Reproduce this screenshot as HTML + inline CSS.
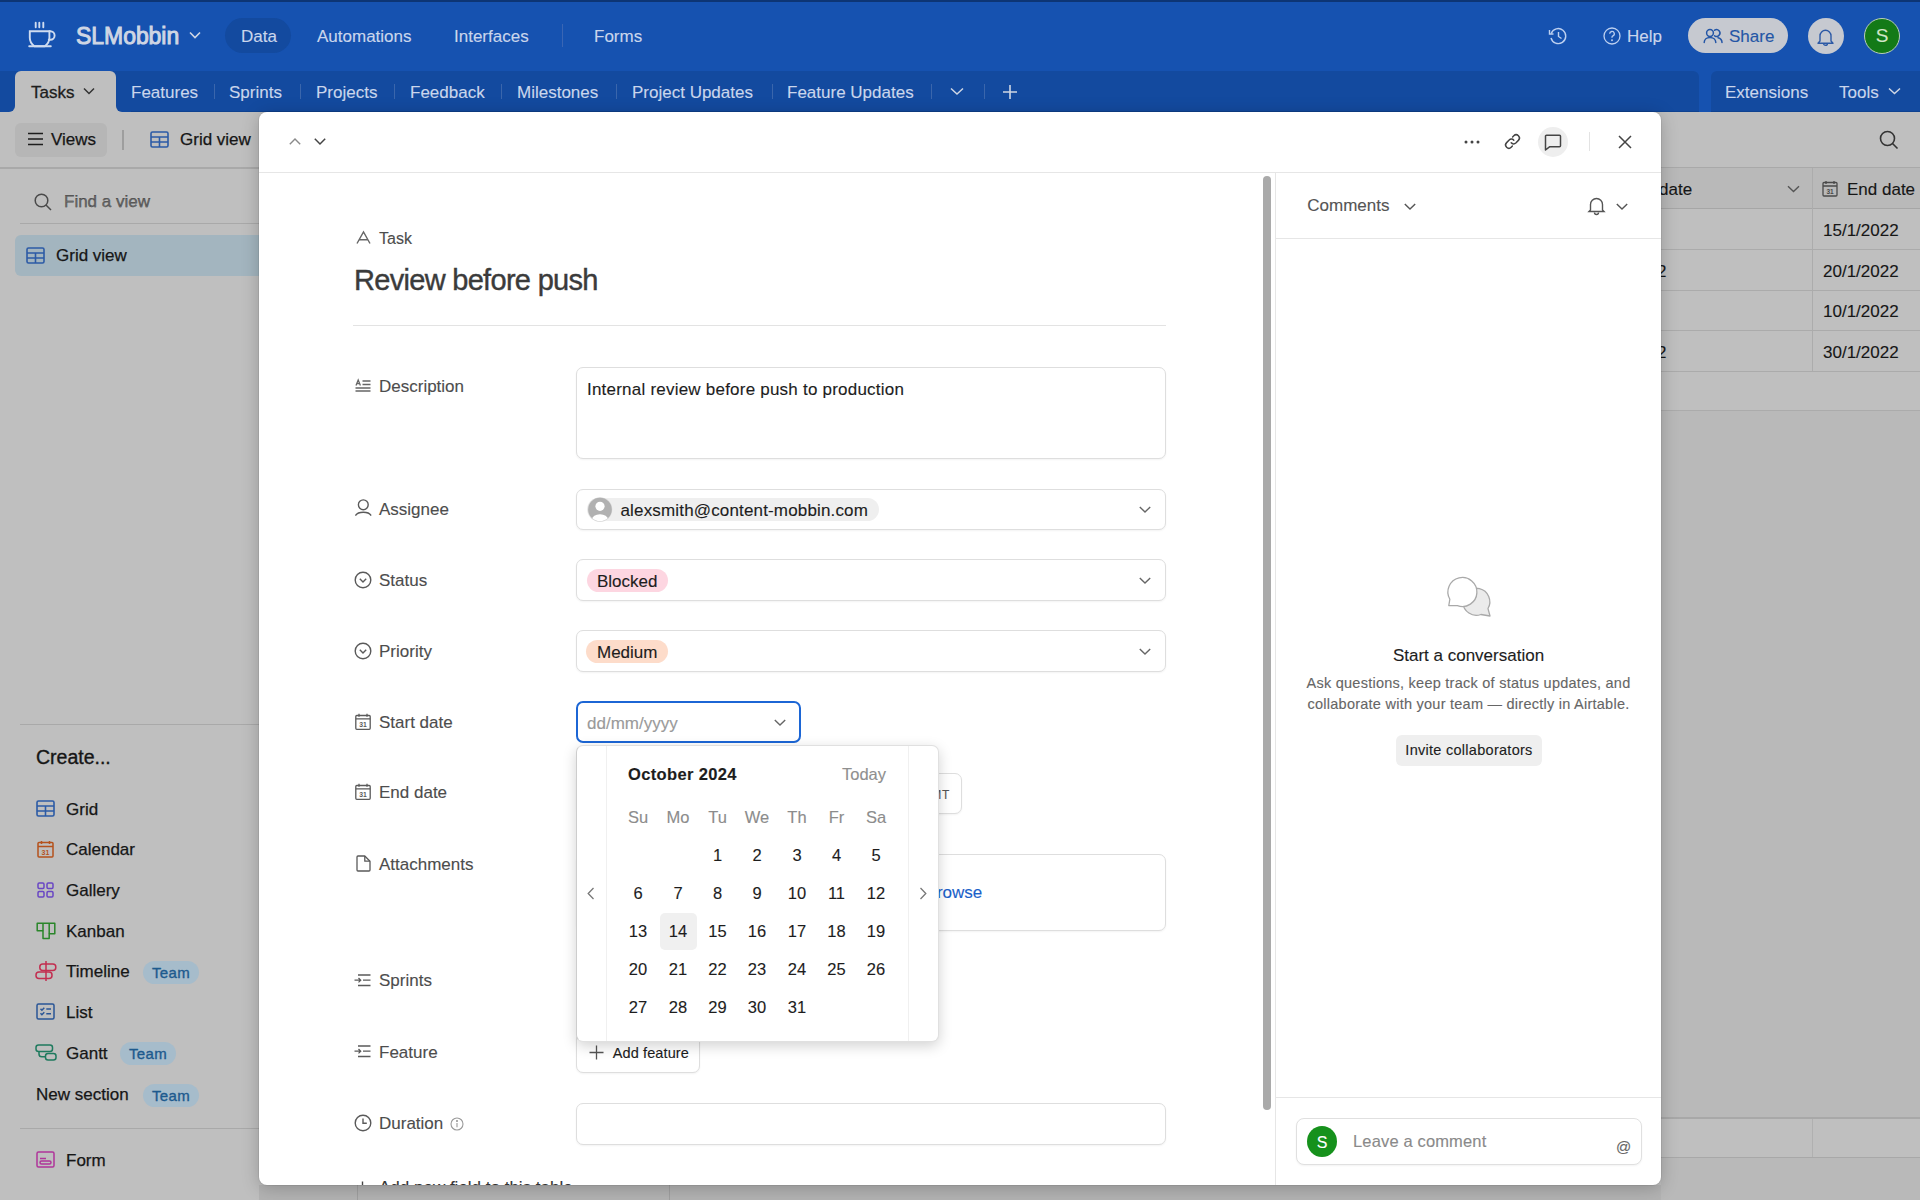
<!DOCTYPE html>
<html><head><meta charset="utf-8">
<style>
*{box-sizing:border-box;margin:0;padding:0}
html{background:#bfbfbf}
html,body{width:1920px;height:1200px;overflow:hidden;font-family:"Liberation Sans",sans-serif;color:#1d1d1d}
.a{position:absolute;white-space:nowrap;-webkit-text-stroke:0.12px currentColor}
svg{position:absolute;overflow:visible}
/* header */
#top{position:absolute;left:0;top:0;width:1920px;height:112px;background:#1652b0;border-top:2px solid #0d3574}
#tabs{position:absolute;left:0;top:71px;width:1699px;height:41px;background:#134a9f;border-radius:0 6px 0 0;border-bottom:1px solid #0f4290}
#tabs2{position:absolute;left:1711px;top:71px;width:209px;height:41px;background:#134a9f;border-radius:6px 0 0 0;border-bottom:1px solid #0f4290}
.nav{font-size:17px;color:#cad6ec;margin-top:0.5px}
.tab{font-size:17px;color:#cad6ec;top:83px}
.sep{position:absolute;width:1px;background:#3a66ac}
/* below */
#viewsbar{position:absolute;left:0;top:112px;width:1920px;height:57px;background:#bfbfbf;border-bottom:2px solid #a9a9a9}
#modal{position:absolute;left:259px;top:112px;width:1402px;height:1073px;background:#fff;border-radius:8px;box-shadow:0 0 0 1px rgba(0,0,0,.06),0 3px 18px rgba(0,0,0,.22);overflow:hidden}
.side{font-size:17px;color:#161616;-webkit-text-stroke:0.25px #161616}
.grid{font-size:17px;color:#161616}
.badge{width:56px;height:23px;border-radius:12px;background:#a6bccb;color:#1d5a8e;font-size:15px;text-align:center;line-height:24px;-webkit-text-stroke:0.35px #1d5a8e;letter-spacing:0.3px}
.lbl{font-size:17px;color:#4d4d4d}
.box{position:absolute;border:1px solid #e1e1e1;border-radius:6px;background:#fff;box-shadow:0 1px 2px rgba(0,0,0,.06)}
</style></head>
<body>

<div id="top"></div>
<svg style="left:28px;top:21px" width="28" height="28" viewBox="0 0 28 28" fill="none" stroke="#cfdcf0" stroke-width="1.9" stroke-linecap="round">
<path d="M7.7 1.8v4.4M11.3 1.8v4.4M15.3 1.8v4.4"/>
<path d="M1.8 10.3h19.6v6.5c0 3.8-2 6.6-4.6 8.4H6.4c-2.6-1.8-4.6-4.6-4.6-8.4z"/>
<path d="M21.4 10.3h1a4.2 4.2 0 0 1 0 8.4h-1.6"/>
<path d="M1.2 25.3h21.6"/>
</svg>
<div class="a" style="left:76px;top:22.5px;font-size:23px;color:#cfd6e4;-webkit-text-stroke:0.95px #cfd6e4;letter-spacing:-0.05px">SLMobbin</div>
<svg style="left:189px;top:31px" width="12" height="8" viewBox="0 0 12 8" fill="none" stroke="#cfd6e4" stroke-width="1.6"><path d="M1 1.5l5 5 5-5"/></svg>
<div class="a" style="left:225px;top:18px;width:66px;height:35px;border-radius:18px;background:#134a9f"></div>
<div class="a nav" style="left:241px;top:26px">Data</div>
<div class="a nav" style="left:317px;top:26px">Automations</div>
<div class="a nav" style="left:454px;top:26px">Interfaces</div>
<div class="sep" style="left:562px;top:24px;height:23px;background:#3a66b4"></div>
<div class="a nav" style="left:594px;top:26px">Forms</div>
<svg style="left:1548px;top:27px" width="20" height="18" viewBox="0 0 20 18" fill="none" stroke="#bdd0f0" stroke-width="1.4"><path d="M3.2 6.5A7.5 7.5 0 1 1 3 11"/><path d="M1.5 3v4h4"/><path d="M10.5 5v4.5l3 2"/></svg>
<svg style="left:1602px;top:26px" width="20" height="20" viewBox="0 0 20 20" fill="none" stroke="#bdd0f0" stroke-width="1.3"><circle cx="10" cy="10" r="8"/><path d="M7.7 7.8a2.3 2.3 0 1 1 3.2 2.1c-.6.3-.9.7-.9 1.3v.5"/><circle cx="10" cy="14.3" r=".35" fill="#bdd0f0"/></svg>
<div class="a nav" style="left:1627px;top:26px">Help</div>
<div class="a" style="left:1688px;top:18px;width:100px;height:35px;border-radius:18px;background:#c6c9d0"></div>
<svg style="left:1703px;top:27px" width="20" height="18" viewBox="0 0 20 18" fill="none" stroke="#2456a6" stroke-width="1.5" stroke-linecap="round"><circle cx="7" cy="6" r="3.4"/><path d="M11.6 3.2A3.4 3.4 0 1 1 11.6 8.8"/><path d="M1.2 15.6c0-3.1 2.6-5.2 5.8-5.2s5.8 2.1 5.8 5.2"/><path d="M15 10.8c2.3.6 4 2.3 4 4.8"/></svg>
<div class="a nav" style="left:1729px;top:26px;color:#2456a6">Share</div>
<div class="a" style="left:1808px;top:18px;width:36px;height:36px;border-radius:50%;background:#c6c9d0"></div>
<svg style="left:1816px;top:27px" width="19" height="20" viewBox="0 0 19 20" fill="none" stroke="#2d5aa6" stroke-width="1.4" stroke-linejoin="round"><path d="M4 14V8.8a5.5 5.5 0 0 1 11 0V14l2 2.2H2z"/><path d="M7.6 16.4a1.9 1.9 0 0 0 3.8 0"/></svg>
<div class="a" style="left:1864px;top:18px;width:36px;height:36px;border-radius:50%;background:#137a17;border:1.5px solid #b9cdb9"></div>
<div class="a" style="left:1864px;top:25px;width:36px;text-align:center;font-size:19px;color:#d2e6c8">S</div>

<div id="tabs"></div>
<div id="tabs2"></div>
<div class="a" style="left:9px;top:105px;width:118px;height:7px;background:#bfbfbf"></div>
<div class="a" style="left:0px;top:95px;width:15px;height:17px;background:#134a9f;border-radius:0 0 6px 0"></div>
<div class="a" style="left:116px;top:95px;width:15px;height:17px;background:#134a9f;border-radius:0 0 0 6px"></div>
<div class="a" style="left:15px;top:71px;width:101px;height:42px;background:#bfbfbf;border-radius:6px 6px 0 0"></div>
<div class="a tab" style="left:31px;color:#1d1d1d;-webkit-text-stroke:0.3px #1d1d1d">Tasks</div>
<svg style="left:83px;top:87px" width="12" height="8" viewBox="0 0 12 8" fill="none" stroke="#333" stroke-width="1.5"><path d="M1 1.5l5 5 5-5"/></svg>
<div class="a tab" style="left:131px">Features</div>
<div class="sep" style="left:214px;top:84px;height:15px"></div>
<div class="a tab" style="left:229px">Sprints</div>
<div class="sep" style="left:300px;top:84px;height:15px"></div>
<div class="a tab" style="left:316px">Projects</div>
<div class="sep" style="left:394px;top:84px;height:15px"></div>
<div class="a tab" style="left:410px">Feedback</div>
<div class="sep" style="left:501px;top:84px;height:15px"></div>
<div class="a tab" style="left:517px">Milestones</div>
<div class="sep" style="left:616px;top:84px;height:15px"></div>
<div class="a tab" style="left:632px">Project Updates</div>
<div class="sep" style="left:772px;top:84px;height:15px"></div>
<div class="a tab" style="left:787px">Feature Updates</div>
<div class="sep" style="left:931px;top:84px;height:15px"></div>
<svg style="left:950px;top:87px" width="14" height="8" viewBox="0 0 14 8" fill="none" stroke="#cfd6e4" stroke-width="1.5"><path d="M1 1.5l6 5.5 6-5.5"/></svg>
<div class="sep" style="left:984px;top:84px;height:15px"></div>
<svg style="left:1002px;top:84px" width="16" height="16" viewBox="0 0 16 16" fill="none" stroke="#cfd6e4" stroke-width="1.6"><path d="M8 1v14M1 8h14"/></svg>
<div class="a tab" style="left:1725px">Extensions</div>
<div class="a tab" style="left:1839px">Tools</div>
<svg style="left:1888px;top:87px" width="13" height="8" viewBox="0 0 13 8" fill="none" stroke="#cfd6e4" stroke-width="1.5"><path d="M1 1.5l5.5 5 5.5-5"/></svg>

<div id="viewsbar"></div>
<div class="a" style="left:15px;top:123px;width:92px;height:34px;border-radius:6px;background:#b6b6b6"></div>
<svg style="left:27px;top:131px" width="18" height="16" viewBox="0 0 18 16" fill="none" stroke="#1d1d1d" stroke-width="1.6"><path d="M1 2.5h15M1 8h15M1 13.5h15"/></svg>
<div class="a side" style="left:51px;top:130px">Views</div>
<div class="a" style="left:122px;top:130px;width:2px;height:20px;background:#9e9e9e"></div>
<svg style="left:150px;top:131px" width="19" height="17" viewBox="0 0 19 17" fill="none" stroke="#2c5ba6" stroke-width="1.6"><rect x="1" y="1" width="17" height="15" rx="1.5"/><path d="M1 6h17M1 11h17M9.5 6v10"/></svg>
<div class="a side" style="left:180px;top:130px">Grid view</div>
<svg style="left:1879px;top:130px" width="20" height="20" viewBox="0 0 20 20" fill="none" stroke="#333" stroke-width="1.6"><circle cx="8.5" cy="8.5" r="7"/><path d="M13.5 13.5l5 5"/></svg>

<!-- sidebar -->
<svg style="left:34px;top:193px" width="18" height="18" viewBox="0 0 18 18" fill="none" stroke="#4a4a4a" stroke-width="1.5"><circle cx="7.5" cy="7.5" r="6.3"/><path d="M12 12l5 5"/></svg>
<div class="a side" style="left:64px;top:192px;color:#6c6c6c">Find a view</div>
<div class="a" style="left:20px;top:223px;width:240px;height:1px;background:#a9a9a9"></div>
<div class="a" style="left:15px;top:235px;width:250px;height:41px;border-radius:6px;background:#a3b5bf"></div>
<svg style="left:26px;top:247px" width="19" height="17" viewBox="0 0 19 17" fill="none" stroke="#2c5ba6" stroke-width="1.6"><rect x="1" y="1" width="17" height="15" rx="1.5"/><path d="M1 6h17M1 11h17M9.5 6v10"/></svg>
<div class="a side" style="left:56px;top:246px">Grid view</div>
<div class="a" style="left:20px;top:724px;width:240px;height:1px;background:#a9a9a9"></div>
<div class="a" style="left:36px;top:746px;font-size:19.5px;color:#161616;-webkit-text-stroke:0.35px #161616">Create...</div>
<svg style="left:36px;top:800px" width="19" height="17" viewBox="0 0 19 17" fill="none" stroke="#2c5ba6" stroke-width="1.6"><rect x="1" y="1" width="17" height="15" rx="1.5"/><path d="M1 6h17M1 11h17M9.5 6v10"/></svg>
<div class="a side" style="left:66px;top:800px">Grid</div>
<svg style="left:37px;top:840px" width="17" height="18" viewBox="0 0 17 18" fill="none" stroke="#b5521c" stroke-width="1.5"><rect x="1" y="2.5" width="15" height="14.5" rx="1"/><path d="M1 6.5h15M4.5 1v3M12.5 1v3"/><text x="8.5" y="14.6" font-size="7" font-family="Liberation Sans" font-weight="bold" text-anchor="middle" fill="#b5521c" stroke="none">31</text></svg>
<div class="a side" style="left:66px;top:840px">Calendar</div>
<svg style="left:37px;top:882px" width="17" height="16" viewBox="0 0 17 16" fill="none" stroke="#6a47c4" stroke-width="1.5"><rect x="1" y="1" width="6" height="5.5" rx="1.2"/><rect x="10" y="1" width="6" height="5.5" rx="1.2"/><rect x="1" y="9.5" width="6" height="5.5" rx="1.2"/><rect x="10" y="9.5" width="6" height="5.5" rx="1.2"/></svg>
<div class="a side" style="left:66px;top:881px">Gallery</div>
<svg style="left:36px;top:922px" width="20" height="18" viewBox="0 0 20 18" fill="none" stroke="#2a862a" stroke-width="1.5" stroke-linejoin="round"><path d="M1.2 1.2h17.6v10.6h-5.6v4.8H7V8.8H1.2z"/><path d="M7 1.2v7.6M13.2 1.2v10.6"/></svg>
<div class="a side" style="left:66px;top:922px">Kanban</div>
<svg style="left:35px;top:960px" width="22" height="22" viewBox="0 0 22 22" fill="none" stroke="#c22e50" stroke-width="1.5"><path d="M11 1v20"/><rect x="4.8" y="4" width="16" height="6.5" rx="3"/><rect x="1" y="12" width="16" height="6.5" rx="3"/></svg>
<div class="a side" style="left:66px;top:962px">Timeline</div>
<div class="a badge" style="left:143px;top:961px">Team</div>
<svg style="left:36px;top:1003px" width="19" height="17" viewBox="0 0 19 17" fill="none" stroke="#2a5596" stroke-width="1.5"><rect x="1" y="1" width="17" height="15" rx="1.5"/><path d="M4.5 5.8l1.4 1.4 2.4-2.4M4.5 10.3l1.4 1.4 2.4-2.4M10.3 6h4.7M10.3 10.8h4.7"/></svg>
<div class="a side" style="left:66px;top:1003px">List</div>
<svg style="left:35px;top:1044px" width="22" height="18" viewBox="0 0 22 18" fill="none" stroke="#1f7a5e" stroke-width="1.5"><rect x="1" y="1" width="16.5" height="6.5" rx="2.5"/><rect x="10.5" y="9.5" width="10.5" height="6.5" rx="2.5"/><path d="M4 7.5v2.5a2.8 2.8 0 0 0 2.8 2.8h3.7"/></svg>
<div class="a side" style="left:66px;top:1044px">Gantt</div>
<div class="a badge" style="left:120px;top:1042px">Team</div>
<div class="a side" style="left:36px;top:1085px">New section</div>
<div class="a badge" style="left:143px;top:1084px">Team</div>
<div class="a" style="left:20px;top:1128px;width:240px;height:1px;background:#a9a9a9"></div>
<svg style="left:36px;top:1151px" width="19" height="17" viewBox="0 0 19 17" fill="none" stroke="#b0359a" stroke-width="1.5"><rect x="1" y="1" width="17" height="15" rx="1.5"/><path d="M4 7.5h6"/><rect x="4" y="10" width="11" height="3" rx="1.5"/></svg>
<div class="a side" style="left:66px;top:1151px">Form</div>

<!-- grid right -->
<div class="a" style="left:1661px;top:168px;width:259px;height:41px;background:#b9b9b9;border-bottom:1px solid #a6a6a6"></div>
<div class="a grid" style="left:1659px;top:179.5px">date</div>
<svg style="left:1787px;top:185px" width="13" height="8" viewBox="0 0 13 8" fill="none" stroke="#555" stroke-width="1.4"><path d="M1 1.2l5.5 5.3 5.5-5.3"/></svg>
<div class="a" style="left:1812px;top:168px;width:1px;height:204px;background:#acacac"></div>
<svg style="left:1822px;top:180px" width="16" height="17" viewBox="0 0 16 17" fill="none" stroke="#4a4a4a" stroke-width="1.3"><rect x="1" y="2.5" width="14" height="13.5" rx="1"/><path d="M1 6h14M4 1v3M12 1v3"/><text x="8" y="14" font-size="6.5" font-family="Liberation Sans" font-weight="bold" text-anchor="middle" fill="#4a4a4a" stroke="none">31</text></svg>
<div class="a grid" style="left:1847px;top:179.5px">End date</div>
<div class="a" style="left:1661px;top:249px;width:259px;height:1px;background:#ababab"></div>
<div class="a" style="left:1661px;top:290px;width:259px;height:1px;background:#ababab"></div>
<div class="a" style="left:1661px;top:330px;width:259px;height:1px;background:#ababab"></div>
<div class="a" style="left:1661px;top:371px;width:259px;height:1px;background:#ababab"></div>
<div class="a" style="left:1661px;top:209px;width:259px;height:202px;background:#bfbfbf;z-index:-1"></div>
<div class="a" style="left:1661px;top:410px;width:259px;height:1px;background:#ababab"></div>
<div class="a" style="left:1661px;top:411px;width:259px;height:789px;background:#b9b9b9;z-index:-1"></div>
<div class="a grid" style="left:1823px;top:220.5px">15/1/2022</div>
<div class="a grid" style="left:1657px;top:261.5px">2</div>
<div class="a grid" style="left:1823px;top:261.5px">20/1/2022</div>
<div class="a grid" style="left:1823px;top:301.5px">10/1/2022</div>
<div class="a grid" style="left:1657px;top:342.5px">2</div>
<div class="a grid" style="left:1823px;top:342.5px">30/1/2022</div>
<div class="a" style="left:1661px;top:1117px;width:259px;height:41px;background:#bfbfbf;border-top:2px solid #a8a8a8;border-bottom:1px solid #a8a8a8"></div>
<div class="a" style="left:1812px;top:1119px;width:1px;height:38px;background:#b0b0b0"></div>
<div class="a" style="left:259px;top:1185px;width:1402px;height:15px;background:#b3b3b3"></div>
<div class="a" style="left:357px;top:1185px;width:1px;height:15px;background:#a0a0a0"></div>
<div class="a" style="left:669px;top:1185px;width:1px;height:15px;background:#a0a0a0"></div>

<div id="modal"><div style="position:absolute;left:-259px;top:-112px;width:1920px;height:1200px">
<div class="a" style="left:259px;top:172px;width:1402px;height:1px;background:#e6e6e6"></div>
<svg style="left:289px;top:138px" width="12" height="7" viewBox="0 0 12 7" fill="none" stroke="#8a8a8a" stroke-width="1.4"><path d="M0.8 6.2L6 1l5.2 5.2"/></svg>
<svg style="left:314px;top:138px" width="12" height="7" viewBox="0 0 12 7" fill="none" stroke="#444" stroke-width="1.5"><path d="M0.8 0.8L6 6l5.2-5.2"/></svg>
<svg style="left:1464px;top:140px" width="16" height="4" viewBox="0 0 16 4"><circle cx="2" cy="2" r="1.5" fill="#444"/><circle cx="8" cy="2" r="1.5" fill="#444"/><circle cx="14" cy="2" r="1.5" fill="#444"/></svg>
<svg style="left:1504px;top:133px" width="17" height="17" viewBox="0 0 17 17" fill="none" stroke="#444" stroke-width="1.5" stroke-linecap="round"><path d="M7.2 9.8a3.2 3.2 0 0 0 4.6.2l2.6-2.6a3.2 3.2 0 0 0-4.6-4.6L8.6 4"/><path d="M9.8 7.2a3.2 3.2 0 0 0-4.6-.2L2.6 9.6a3.2 3.2 0 0 0 4.6 4.6L8.4 13"/></svg>
<div class="a" style="left:1538px;top:127px;width:30px;height:30px;border-radius:50%;background:#eeeeee"></div>
<svg style="left:1544px;top:134px" width="18" height="17" viewBox="0 0 18 17" fill="none" stroke="#444" stroke-width="1.5" stroke-linejoin="round"><path d="M1.5 2.2a1 1 0 0 1 1-1h13a1 1 0 0 1 1 1v9.6a1 1 0 0 1-1 1H5.5L1.5 16z"/></svg>
<div class="a" style="left:1589px;top:132px;width:1px;height:19px;background:#e3e3e3"></div>
<svg style="left:1618px;top:135px" width="14" height="14" viewBox="0 0 14 14" fill="none" stroke="#444" stroke-width="1.5"><path d="M1 1l12 12M13 1L1 13"/></svg>
<div class="a" style="left:1263px;top:176px;width:8px;height:934px;border-radius:4px;background:#aaaaaa"></div>
<div class="a" style="left:1275px;top:172px;width:1px;height:1013px;background:#e6e6e6"></div>
<svg style="left:356px;top:231px" width="15" height="13" viewBox="0 0 15 13" fill="none" stroke="#666" stroke-width="1.4"><path d="M1 12.5L7.5 1l6.5 11.5M3.2 8.8h8.6"/></svg>
<div class="a" style="left:379px;top:230.12px;font-size:16px;color:#4d4d4d;">Task</div>
<div class="a" style="left:354px;top:264.06px;font-size:29px;color:#3b3b3b;letter-spacing:-0.7px;-webkit-text-stroke:0.4px #3b3b3b;">Review before push</div>
<div class="a" style="left:353px;top:325px;width:813px;height:1px;background:#e3e3e3"></div>
<svg style="left:355px;top:379px" width="16" height="13" viewBox="0 0 16 13" fill="none" stroke="#666" stroke-width="1.3"><path d="M1 6.5L3.2 1l2.2 5.5M1.8 4.6h2.8M7.5 2h8M7.5 5.5h8M0.5 9h15M0.5 12h15"/></svg>
<div class="a" style="left:379px;top:376.92px;font-size:17px;color:#4d4d4d;">Description</div>
<div class="a" style="left:576px;top:367px;width:590px;height:92px;border:1px solid #dedede;border-radius:7px;background:#fff;box-shadow:0 1px 2px rgba(0,0,0,.05);"></div>
<div class="a" style="left:587px;top:380.22px;font-size:17px;color:#1d1d1d;letter-spacing:0.22px;">Internal review before push to production</div>
<svg style="left:355px;top:499px" width="17" height="17" viewBox="0 0 17 17" fill="none" stroke="#5a5a5a" stroke-width="1.4" stroke-linecap="round"><circle cx="8.3" cy="5.8" r="4.9"/><path d="M0.8 16.2C3 12.2 13.6 12.2 15.8 16.2"/></svg>
<div class="a" style="left:379px;top:499.62px;font-size:17px;color:#4d4d4d;">Assignee</div>
<div class="a" style="left:576px;top:489px;width:590px;height:41px;border:1px solid #dedede;border-radius:7px;background:#fff;box-shadow:0 1px 2px rgba(0,0,0,.05);"></div>
<div class="a" style="left:587px;top:498px;width:292px;height:23px;border-radius:12px;background:#efefef"></div>
<svg style="left:587px;top:497px" width="26" height="25" viewBox="0 0 26 25"><defs><clipPath id="av"><circle cx="13" cy="12.5" r="11.8"/></clipPath></defs><circle cx="13" cy="12.5" r="12.3" fill="#dcdcdc"/><circle cx="13" cy="12.5" r="11.8" fill="#b1b1b1"/><g clip-path="url(#av)" fill="#fff"><circle cx="13" cy="9.3" r="4.6"/><ellipse cx="13" cy="22.5" rx="8" ry="5.2"/></g></svg>
<div class="a" style="left:620.5px;top:500.62px;font-size:17px;color:#1d1d1d;letter-spacing:0.16px;">alexsmith@content-mobbin.com</div>
<svg style="left:1139px;top:506px" width="12" height="7.2" viewBox="0 0 12 7" fill="none" stroke="#666" stroke-width="1.40"><path d="M0.8 0.8L6 6l5.2-5.2"/></svg>
<svg style="left:354px;top:571px" width="18" height="18" viewBox="0 0 18 18" fill="none" stroke="#5a5a5a" stroke-width="1.4"><circle cx="9" cy="9" r="7.8"/><path d="M5.8 7.8L9 11l3.2-3.2"/></svg>
<div class="a" style="left:379px;top:570.62px;font-size:17px;color:#4d4d4d;">Status</div>
<div class="a" style="left:576px;top:559px;width:590px;height:42px;border:1px solid #dedede;border-radius:7px;background:#fff;box-shadow:0 1px 2px rgba(0,0,0,.05);"></div>
<div class="a" style="left:587px;top:569px;width:81px;height:23px;border-radius:12px;background:#fdd6e1"></div>
<div class="a" style="left:597px;top:571.62px;font-size:17px;color:#1d1d1d;">Blocked</div>
<svg style="left:1139px;top:577px" width="12" height="7.2" viewBox="0 0 12 7" fill="none" stroke="#666" stroke-width="1.40"><path d="M0.8 0.8L6 6l5.2-5.2"/></svg>
<svg style="left:354px;top:642px" width="18" height="18" viewBox="0 0 18 18" fill="none" stroke="#5a5a5a" stroke-width="1.4"><circle cx="9" cy="9" r="7.8"/><path d="M5.8 7.8L9 11l3.2-3.2"/></svg>
<div class="a" style="left:379px;top:641.62px;font-size:17px;color:#4d4d4d;">Priority</div>
<div class="a" style="left:576px;top:630px;width:590px;height:42px;border:1px solid #dedede;border-radius:7px;background:#fff;box-shadow:0 1px 2px rgba(0,0,0,.05);"></div>
<div class="a" style="left:586px;top:640px;width:82px;height:23px;border-radius:12px;background:#fddcca"></div>
<div class="a" style="left:597px;top:642.62px;font-size:17px;color:#1d1d1d;">Medium</div>
<svg style="left:1139px;top:648px" width="12" height="7.2" viewBox="0 0 12 7" fill="none" stroke="#666" stroke-width="1.40"><path d="M0.8 0.8L6 6l5.2-5.2"/></svg>
<svg style="left:355px;top:713px" width="16" height="17" viewBox="0 0 16 17" fill="none" stroke="#5a5a5a" stroke-width="1.3"><rect x="0.8" y="2.5" width="14.4" height="13.8" rx="1"/><path d="M0.8 5.8h14.4M4 0.8v3M12 0.8v3"/><text x="8" y="14.2" font-size="6.8" font-family="Liberation Sans" font-weight="bold" text-anchor="middle" fill="#5a5a5a" stroke="none">31</text></svg>
<div class="a" style="left:379px;top:712.62px;font-size:17px;color:#4d4d4d;">Start date</div>
<div class="a" style="left:576px;top:701px;width:225px;height:42px;border:2px solid #1c66d5;border-radius:7px;background:#fff"></div>
<div class="a" style="left:587px;top:713.62px;font-size:17px;color:#9a9a9a;">dd/mm/yyyy</div>
<svg style="left:774px;top:719px" width="12" height="7.2" viewBox="0 0 12 7" fill="none" stroke="#666" stroke-width="1.40"><path d="M0.8 0.8L6 6l5.2-5.2"/></svg>
<svg style="left:355px;top:783px" width="16" height="17" viewBox="0 0 16 17" fill="none" stroke="#5a5a5a" stroke-width="1.3"><rect x="0.8" y="2.5" width="14.4" height="13.8" rx="1"/><path d="M0.8 5.8h14.4M4 0.8v3M12 0.8v3"/><text x="8" y="14.2" font-size="6.8" font-family="Liberation Sans" font-weight="bold" text-anchor="middle" fill="#5a5a5a" stroke="none">31</text></svg>
<div class="a" style="left:379px;top:783.32px;font-size:17px;color:#4d4d4d;">End date</div>
<div class="a" style="left:576px;top:773px;width:386px;height:41px;border:1px solid #dedede;border-radius:7px;background:#fff;box-shadow:0 1px 2px rgba(0,0,0,.05);"></div>
<div class="a" style="left:921px;top:788.14px;font-size:12px;color:#555;letter-spacing:0.8px;">GMT</div>
<svg style="left:356px;top:855px" width="15" height="17" viewBox="0 0 15 17" fill="none" stroke="#5a5a5a" stroke-width="1.3" stroke-linejoin="round"><path d="M1 2a1 1 0 0 1 1-1h6.8L14 6.2V15a1 1 0 0 1-1 1H2a1 1 0 0 1-1-1z"/><path d="M8.8 1v5.2H14"/></svg>
<div class="a" style="left:379px;top:854.62px;font-size:17px;color:#4d4d4d;">Attachments</div>
<div class="a" style="left:576px;top:854px;width:590px;height:77px;border:1px solid #dedede;border-radius:7px;background:#fff;box-shadow:0 1px 2px rgba(0,0,0,.05);"></div>
<div class="a" style="left:927.5px;top:882.62px;font-size:17px;color:#1b61c9;">browse</div>
<svg style="left:354px;top:974px" width="17" height="13" viewBox="0 0 17 13" fill="none" stroke="#5a5a5a" stroke-width="1.3"><path d="M4 1h12.5M0.5 6.2h6M4.5 4l2.2 2.2L4.5 8.4M9 6.2h7.5M4 11.5h12.5"/></svg>
<div class="a" style="left:379px;top:970.62px;font-size:17px;color:#4d4d4d;">Sprints</div>
<div class="a" style="left:576px;top:961px;width:124px;height:41px;border:1px solid #dedede;border-radius:7px;background:#fff"></div>
<svg style="left:354px;top:1045px" width="17" height="13" viewBox="0 0 17 13" fill="none" stroke="#5a5a5a" stroke-width="1.3"><path d="M4 1h12.5M0.5 6.2h6M4.5 4l2.2 2.2L4.5 8.4M9 6.2h7.5M4 11.5h12.5"/></svg>
<div class="a" style="left:379px;top:1042.62px;font-size:17px;color:#4d4d4d;">Feature</div>
<div class="a" style="left:576px;top:1032px;width:124px;height:41px;border:1px solid #dedede;border-radius:7px;background:#fff;box-shadow:0 1px 2px rgba(0,0,0,.05)"></div>
<svg style="left:589px;top:1045px" width="15" height="15" viewBox="0 0 15 15" fill="none" stroke="#555" stroke-width="1.3"><path d="M7.5 0.5v14M0.5 7.5h14"/></svg>
<div class="a" style="left:612.7px;top:1044.88px;font-size:14.5px;color:#1d1d1d;letter-spacing:0.12px;">Add feature</div>
<svg style="left:354px;top:1114px" width="18" height="18" viewBox="0 0 18 18" fill="none" stroke="#5a5a5a" stroke-width="1.4"><circle cx="9" cy="9" r="7.8"/><path d="M9 4.5V9.3h3.8"/></svg>
<div class="a" style="left:379px;top:1113.62px;font-size:17px;color:#4d4d4d;">Duration</div>
<svg style="left:450px;top:1117px" width="14" height="14" viewBox="0 0 14 14" fill="none" stroke="#9a9a9a" stroke-width="1.1"><circle cx="7" cy="7" r="6"/><path d="M7 6v4.2"/><circle cx="7" cy="4" r=".5" fill="#9a9a9a"/></svg>
<div class="a" style="left:576px;top:1103px;width:590px;height:42px;border:1px solid #dedede;border-radius:7px;background:#fff;box-shadow:0 1px 2px rgba(0,0,0,.05);"></div>
<svg style="left:355px;top:1181px" width="15" height="15" viewBox="0 0 15 15" fill="none" stroke="#444" stroke-width="1.4"><path d="M7.5 0.5v14M0.5 7.5h14"/></svg>
<div class="a" style="left:379px;top:1177.62px;font-size:17px;color:#333;">Add new field to this table</div>
<div class="a" style="left:576px;top:745px;width:363px;height:297px;border:1px solid #e0e0e0;border-left-color:#cdcdcd;border-radius:7px;background:#fff;box-shadow:0 4px 14px rgba(0,0,0,.18)"></div>
<div class="a" style="left:606px;top:746px;width:1px;height:295px;background:#f0f0f0"></div>
<div class="a" style="left:908px;top:746px;width:1px;height:295px;background:#f0f0f0"></div>
<div class="a" style="left:628px;top:764.77px;font-size:16.5px;color:#1d1d1d;font-weight:bold;letter-spacing:0.35px;">October 2024</div>
<div class="a" style="left:842px;top:765.07px;font-size:16.5px;color:#8f8f8f;">Today</div>
<div class="a" style="left:618px;width:40px;text-align:center;top:808.17px;font-size:16.5px;color:#8c8c8c">Su</div>
<div class="a" style="left:658px;width:40px;text-align:center;top:808.17px;font-size:16.5px;color:#8c8c8c">Mo</div>
<div class="a" style="left:697.5px;width:40px;text-align:center;top:808.17px;font-size:16.5px;color:#8c8c8c">Tu</div>
<div class="a" style="left:737px;width:40px;text-align:center;top:808.17px;font-size:16.5px;color:#8c8c8c">We</div>
<div class="a" style="left:777px;width:40px;text-align:center;top:808.17px;font-size:16.5px;color:#8c8c8c">Th</div>
<div class="a" style="left:816.5px;width:40px;text-align:center;top:808.17px;font-size:16.5px;color:#8c8c8c">Fr</div>
<div class="a" style="left:856px;width:40px;text-align:center;top:808.17px;font-size:16.5px;color:#8c8c8c">Sa</div>
<div class="a" style="left:660px;top:913px;width:37px;height:37px;border-radius:5px;background:#f0f0f0"></div>
<div class="a" style="left:697.5px;width:40px;text-align:center;top:846.07px;font-size:16.5px;color:#1d1d1d">1</div>
<div class="a" style="left:737px;width:40px;text-align:center;top:846.07px;font-size:16.5px;color:#1d1d1d">2</div>
<div class="a" style="left:777px;width:40px;text-align:center;top:846.07px;font-size:16.5px;color:#1d1d1d">3</div>
<div class="a" style="left:816.5px;width:40px;text-align:center;top:846.07px;font-size:16.5px;color:#1d1d1d">4</div>
<div class="a" style="left:856px;width:40px;text-align:center;top:846.07px;font-size:16.5px;color:#1d1d1d">5</div>
<div class="a" style="left:618px;width:40px;text-align:center;top:884.07px;font-size:16.5px;color:#1d1d1d">6</div>
<div class="a" style="left:658px;width:40px;text-align:center;top:884.07px;font-size:16.5px;color:#1d1d1d">7</div>
<div class="a" style="left:697.5px;width:40px;text-align:center;top:884.07px;font-size:16.5px;color:#1d1d1d">8</div>
<div class="a" style="left:737px;width:40px;text-align:center;top:884.07px;font-size:16.5px;color:#1d1d1d">9</div>
<div class="a" style="left:777px;width:40px;text-align:center;top:884.07px;font-size:16.5px;color:#1d1d1d">10</div>
<div class="a" style="left:816.5px;width:40px;text-align:center;top:884.07px;font-size:16.5px;color:#1d1d1d">11</div>
<div class="a" style="left:856px;width:40px;text-align:center;top:884.07px;font-size:16.5px;color:#1d1d1d">12</div>
<div class="a" style="left:618px;width:40px;text-align:center;top:922.07px;font-size:16.5px;color:#1d1d1d">13</div>
<div class="a" style="left:658px;width:40px;text-align:center;top:922.07px;font-size:16.5px;color:#1d1d1d">14</div>
<div class="a" style="left:697.5px;width:40px;text-align:center;top:922.07px;font-size:16.5px;color:#1d1d1d">15</div>
<div class="a" style="left:737px;width:40px;text-align:center;top:922.07px;font-size:16.5px;color:#1d1d1d">16</div>
<div class="a" style="left:777px;width:40px;text-align:center;top:922.07px;font-size:16.5px;color:#1d1d1d">17</div>
<div class="a" style="left:816.5px;width:40px;text-align:center;top:922.07px;font-size:16.5px;color:#1d1d1d">18</div>
<div class="a" style="left:856px;width:40px;text-align:center;top:922.07px;font-size:16.5px;color:#1d1d1d">19</div>
<div class="a" style="left:618px;width:40px;text-align:center;top:960.07px;font-size:16.5px;color:#1d1d1d">20</div>
<div class="a" style="left:658px;width:40px;text-align:center;top:960.07px;font-size:16.5px;color:#1d1d1d">21</div>
<div class="a" style="left:697.5px;width:40px;text-align:center;top:960.07px;font-size:16.5px;color:#1d1d1d">22</div>
<div class="a" style="left:737px;width:40px;text-align:center;top:960.07px;font-size:16.5px;color:#1d1d1d">23</div>
<div class="a" style="left:777px;width:40px;text-align:center;top:960.07px;font-size:16.5px;color:#1d1d1d">24</div>
<div class="a" style="left:816.5px;width:40px;text-align:center;top:960.07px;font-size:16.5px;color:#1d1d1d">25</div>
<div class="a" style="left:856px;width:40px;text-align:center;top:960.07px;font-size:16.5px;color:#1d1d1d">26</div>
<div class="a" style="left:618px;width:40px;text-align:center;top:998.07px;font-size:16.5px;color:#1d1d1d">27</div>
<div class="a" style="left:658px;width:40px;text-align:center;top:998.07px;font-size:16.5px;color:#1d1d1d">28</div>
<div class="a" style="left:697.5px;width:40px;text-align:center;top:998.07px;font-size:16.5px;color:#1d1d1d">29</div>
<div class="a" style="left:737px;width:40px;text-align:center;top:998.07px;font-size:16.5px;color:#1d1d1d">30</div>
<div class="a" style="left:777px;width:40px;text-align:center;top:998.07px;font-size:16.5px;color:#1d1d1d">31</div>
<svg style="left:587px;top:887px" width="8" height="13" viewBox="0 0 8 13" fill="none" stroke="#777" stroke-width="1.3"><path d="M6.5 1L1.2 6.5 6.5 12"/></svg>
<svg style="left:919px;top:887px" width="8" height="13" viewBox="0 0 8 13" fill="none" stroke="#777" stroke-width="1.3"><path d="M1.5 1l5.3 5.5L1.5 12"/></svg>
<div class="a" style="left:1307.3px;top:196.31px;font-size:17px;color:#555;">Comments</div>
<svg style="left:1404px;top:203px" width="12" height="7.2" viewBox="0 0 12 7" fill="none" stroke="#555" stroke-width="1.40"><path d="M0.8 0.8L6 6l5.2-5.2"/></svg>
<svg style="left:1588px;top:197px" width="17" height="18" viewBox="0 0 17 18" fill="none" stroke="#555" stroke-width="1.4"><path d="M2.5 13V7.5a6 6 0 0 1 12 0V13l1.5 1.5H1z"/><path d="M6.5 15.5a2 2 0 0 0 4 0"/></svg>
<svg style="left:1616px;top:203px" width="12" height="7.2" viewBox="0 0 12 7" fill="none" stroke="#555" stroke-width="1.40"><path d="M0.8 0.8L6 6l5.2-5.2"/></svg>
<div class="a" style="left:1276px;top:238px;width:385px;height:1px;background:#e6e6e6"></div>
<svg style="left:1446px;top:576px" width="46" height="42" viewBox="0 0 46 42" stroke="#a9a9a9" stroke-width="1.3" stroke-linejoin="round"><path d="M42 32.55A13.5 13.5 0 1 0 34.9 38.5L44 40z" fill="#ebebeb"/><path d="M11.44 29.63A14.5 14.5 0 1 0 3.84 23.25L2.8 29.5z" fill="#fff"/></svg>
<div class="a" style="left:1276px;width:385px;text-align:center;top:646.12px;font-size:17px;color:#1d1d1d">Start a conversation</div>
<div class="a" style="left:1276px;width:385px;text-align:center;top:674.68px;font-size:14.5px;color:#666;letter-spacing:0.25px">Ask questions, keep track of status updates, and</div>
<div class="a" style="left:1276px;width:385px;text-align:center;top:695.68px;font-size:14.5px;color:#666;letter-spacing:0.25px">collaborate with your team — directly in Airtable.</div>
<div class="a" style="left:1396px;top:735px;width:146px;height:31px;border-radius:6px;background:#efefef"></div>
<div class="a" style="left:1396px;width:146px;text-align:center;top:741.88px;font-size:14.5px;color:#1d1d1d;letter-spacing:0.28px">Invite collaborators</div>
<div class="a" style="left:1276px;top:1097px;width:385px;height:1px;background:#e6e6e6"></div>
<div class="a" style="left:1296px;top:1118px;width:346px;height:47px;border:1px solid #e0e0e0;border-radius:8px;background:#fff;box-shadow:0 1px 2px rgba(0,0,0,.05)"></div>
<div class="a" style="left:1307px;top:1126px;width:30px;height:31px;border-radius:50%;background:#16911c"></div>
<div class="a" style="left:1307px;width:30px;text-align:center;top:1133.52px;font-size:16px;color:#fff">S</div>
<div class="a" style="left:1353px;top:1132.07px;font-size:16.5px;color:#8a8a8a;letter-spacing:0.15px;">Leave a comment</div>
<div class="a" style="left:1616px;top:1138.42px;font-size:15px;color:#666;">@</div>
</div></div><!--/modal-->
</body></html>
